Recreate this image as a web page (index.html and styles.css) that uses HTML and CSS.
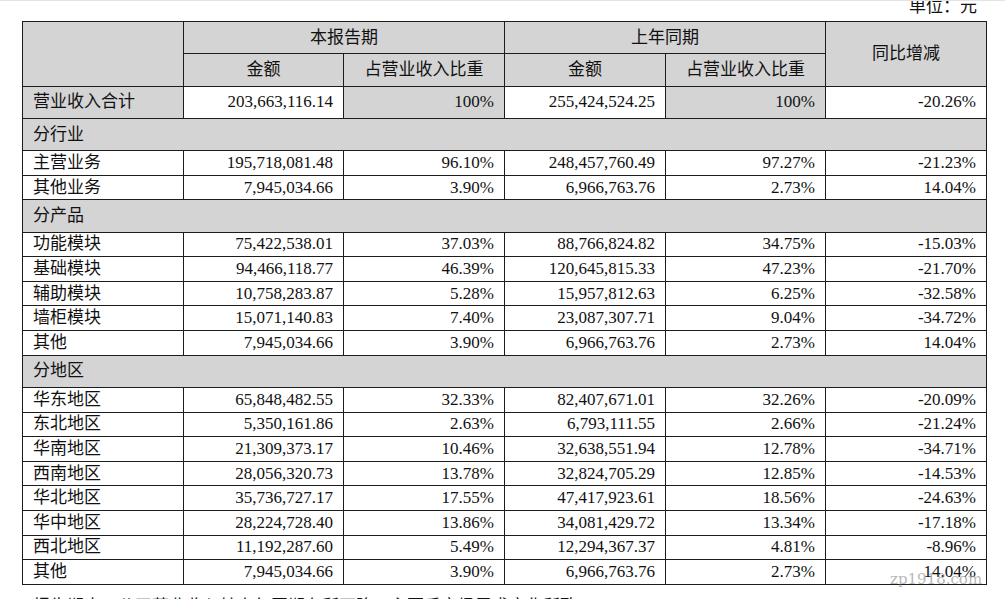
FILE: index.html
```html
<!DOCTYPE html>
<html lang="zh-CN">
<head>
<meta charset="utf-8">
<title>营业收入构成</title>
<link rel="stylesheet" href="styles.css">
</head>
<body>
<div class="page">
  <div class="topline"></div>
  <div class="unit"><span>单位：元</span></div>
  <table class="rev">
    <colgroup>
      <col class="c1"><col class="c2"><col class="c3"><col class="c4"><col class="c5"><col class="c6">
    </colgroup>
    <tr class="tall">
      <td class="gray" rowspan="2"></td>
      <td class="gray center" colspan="2">本报告期</td>
      <td class="gray center" colspan="2">上年同期</td>
      <td class="gray center" rowspan="2">同比增减</td>
    </tr>
    <tr class="tall">
      <td class="gray center">金额</td>
      <td class="gray center">占营业收入比重</td>
      <td class="gray center">金额</td>
      <td class="gray center">占营业收入比重</td>
    </tr>
    <tr class="tall">
      <td class="gray label">营业收入合计</td>
      <td class="num">203,663,116.14</td>
      <td class="gray num">100%</td>
      <td class="num">255,424,524.25</td>
      <td class="gray num">100%</td>
      <td class="num">-20.26%</td>
    </tr>
    <tr class="tall"><td class="gray label" colspan="6">分行业</td></tr>
    <tr><td class="label">主营业务</td><td class="num">195,718,081.48</td><td class="num">96.10%</td><td class="num">248,457,760.49</td><td class="num">97.27%</td><td class="num">-21.23%</td></tr>
    <tr><td class="label">其他业务</td><td class="num">7,945,034.66</td><td class="num">3.90%</td><td class="num">6,966,763.76</td><td class="num">2.73%</td><td class="num">14.04%</td></tr>
    <tr class="tall"><td class="gray label" colspan="6">分产品</td></tr>
    <tr><td class="label">功能模块</td><td class="num">75,422,538.01</td><td class="num">37.03%</td><td class="num">88,766,824.82</td><td class="num">34.75%</td><td class="num">-15.03%</td></tr>
    <tr><td class="label">基础模块</td><td class="num">94,466,118.77</td><td class="num">46.39%</td><td class="num">120,645,815.33</td><td class="num">47.23%</td><td class="num">-21.70%</td></tr>
    <tr><td class="label">辅助模块</td><td class="num">10,758,283.87</td><td class="num">5.28%</td><td class="num">15,957,812.63</td><td class="num">6.25%</td><td class="num">-32.58%</td></tr>
    <tr><td class="label">墙柜模块</td><td class="num">15,071,140.83</td><td class="num">7.40%</td><td class="num">23,087,307.71</td><td class="num">9.04%</td><td class="num">-34.72%</td></tr>
    <tr><td class="label">其他</td><td class="num">7,945,034.66</td><td class="num">3.90%</td><td class="num">6,966,763.76</td><td class="num">2.73%</td><td class="num">14.04%</td></tr>
    <tr class="tall"><td class="gray label" colspan="6">分地区</td></tr>
    <tr><td class="label">华东地区</td><td class="num">65,848,482.55</td><td class="num">32.33%</td><td class="num">82,407,671.01</td><td class="num">32.26%</td><td class="num">-20.09%</td></tr>
    <tr><td class="label">东北地区</td><td class="num">5,350,161.86</td><td class="num">2.63%</td><td class="num">6,793,111.55</td><td class="num">2.66%</td><td class="num">-21.24%</td></tr>
    <tr><td class="label">华南地区</td><td class="num">21,309,373.17</td><td class="num">10.46%</td><td class="num">32,638,551.94</td><td class="num">12.78%</td><td class="num">-34.71%</td></tr>
    <tr><td class="label">西南地区</td><td class="num">28,056,320.73</td><td class="num">13.78%</td><td class="num">32,824,705.29</td><td class="num">12.85%</td><td class="num">-14.53%</td></tr>
    <tr><td class="label">华北地区</td><td class="num">35,736,727.17</td><td class="num">17.55%</td><td class="num">47,417,923.61</td><td class="num">18.56%</td><td class="num">-24.63%</td></tr>
    <tr><td class="label">华中地区</td><td class="num">28,224,728.40</td><td class="num">13.86%</td><td class="num">34,081,429.72</td><td class="num">13.34%</td><td class="num">-17.18%</td></tr>
    <tr><td class="label">西北地区</td><td class="num">11,192,287.60</td><td class="num">5.49%</td><td class="num">12,294,367.37</td><td class="num">4.81%</td><td class="num">-8.96%</td></tr>
    <tr><td class="label">其他</td><td class="num">7,945,034.66</td><td class="num">3.90%</td><td class="num">6,966,763.76</td><td class="num">2.73%</td><td class="num">14.04%</td></tr>
  </table>
  <p class="note">报告期内，公司营业收入较上年同期有所下降，主要系市场需求变化所致。</p>
  <div class="watermark">zp1918.com</div>
</div>
</body>
</html>
```

FILE: styles.css
```css
html, body {
  margin: 0;
  padding: 0;
  background: #ffffff;
}

body {
  width: 1005px;
  height: 599px;
  overflow: hidden;
  font-family: "Liberation Serif", "Noto Sans CJK SC", serif;
  color: #111111;
}

.page {
  position: relative;
  padding-left: 22px;
}

.topline {
  height: 1px;
  background: #e4e4e4;
  margin-left: -22px;
  position: relative;
  z-index: 1;
}

.unit {
  display: flow-root;
  width: 955px;
  height: 20px;
  text-align: right;
  font-size: 17px;
  line-height: 17px;
}

.unit span {
  display: block;
  margin-top: -3px;
}

.rev {
  border-collapse: collapse;
  table-layout: fixed;
  width: 965px;
  font-size: 17px;
}

.rev .c1 { width: 161px; }
.rev .c2 { width: 160px; }
.rev .c3 { width: 161px; }
.rev .c4 { width: 161px; }
.rev .c5 { width: 160px; }
.rev .c6 { width: 161px; }

.rev td {
  border: 1px solid #1c1c1c;
  padding: 0 10px;
  height: 23.6px;
  line-height: 16px;
  white-space: nowrap;
  vertical-align: middle;
}

.rev tr.tall td {
  height: 31.3px;
}

.rev td.gray {
  background: #d4d4d4;
}

.rev td.center {
  text-align: center;
}

.rev td.label {
  text-align: left;
}

.rev td.num {
  text-align: right;
}

.note {
  margin: 12px 0 0 11px;
  font-size: 17px;
  line-height: 20px;
}

.watermark {
  position: absolute;
  left: 890px;
  top: 570px;
  font-family: "DejaVu Serif", serif;
  font-size: 15px;
  color: rgba(120, 120, 120, 0.55);
}
```
